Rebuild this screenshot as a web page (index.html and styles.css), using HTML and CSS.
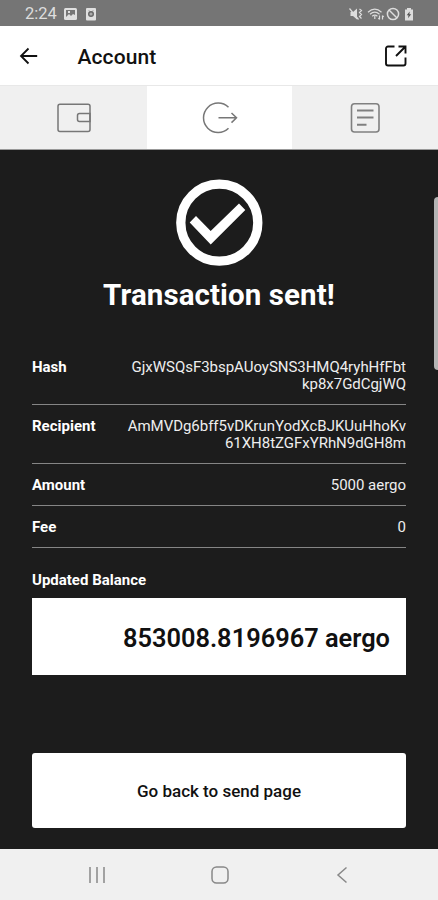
FILE: index.html
```html
<!DOCTYPE html>
<html lang="en">
<head>
<meta charset="utf-8">
<title>Account</title>
<link rel="stylesheet" href="styles.css">
</head>
<body>
<div class="screen">
  <div class="status">
    <span class="clock">2:24</span>
    <svg class="status-left" width="34" height="16" viewBox="0 0 34 16">
      <rect x="1" y="2" width="13" height="12" rx="1.500" fill="#e0e0e0"/>
      <path d="M3 4h9v5l-2-1-2 2-2-2-3 3z" fill="#777"/>
      <path d="M5 5h2v2H5z" fill="#e0e0e0"/>
      <rect x="23" y="2" width="10" height="12.500" rx="1" fill="#e0e0e0"/>
      <circle cx="28" cy="8" r="2.300" fill="#aaa" stroke="#666" stroke-width="1.400"/>
      <path d="M26 4.500l1 1M30 4.500l-1 1" stroke="#777"/>
    </svg>
    <svg class="status-right" width="68" height="16" viewBox="0 0 68 16" fill="none" stroke="#ddd" stroke-width="1.200">
      <path d="M2.500 6h2.500l4-3.500v11L5 10H2.500z" fill="#ddd" stroke="none"/>
      <path d="M1.500 2.500l9 11M11.500 3l2 1.500-2 2 2 2-2 2 2 2"/>
      <path d="M20 6.200c4.500-4 9-4 13.500 0M22 8.200c3-2.700 6.500-2.700 9.500 0M24.200 10.200c1.700-1.500 3.500-1.500 5.200 0"/>
      <path d="M26.800 10v3M31.500 9.500v4M34.500 13.500v-4M30.300 12l1.200 1.500M34.500 9.500l1.200 1.500"/>
      <circle cx="45" cy="8" r="5.600" stroke-width="1.500"/>
      <path d="M41 4l8 8" stroke-width="1.500"/>
      <path d="M57 3.500h2V2h4v1.500h2v11h-8z" fill="#ddd" stroke="none"/>
      <path d="M61.700 5.500l-3 3.800h1.800l-.5 3 3.200-4h-1.800z" fill="#555" stroke="none"/>
    </svg>
  </div>

  <header class="header">
    <svg width="20" height="20" viewBox="0 0 20 20" fill="none" stroke="#111" stroke-width="1.800"><path d="M19.200 10H3.500M10.500 2.500L3 10l7.500 7.500"/></svg>
    <h1 class="header-title">Account</h1>
    <svg class="open" width="24" height="24" viewBox="0 0 24 24" fill="none" stroke="#111" stroke-width="1.900"><path d="M10.500 2.500H4a2 2 0 0 0-2 2v15a2 2 0 0 0 2 2h15.500a2 2 0 0 0 2-2V13.500M14.500 2.500h7v7M21.500 2.500L12 12"/></svg>
  </header>

  <nav class="tabs">
    <div class="tab">
      <svg width="36" height="32" viewBox="0 0 36 32" fill="none" stroke="#777" stroke-width="1.500"><rect x="2" y="2.200" width="32" height="27.300" rx="2"/><path d="M34 11.500H23.500a2 2 0 0 0-2 2v4a2 2 0 0 0 2 2H34z"/></svg>
    </div>
    <div class="tab tab-active">
      <svg width="38" height="32" viewBox="0 0 38 32" fill="none" stroke="#777" stroke-width="1.500"><path d="M27.500 5.300A14.700 14.700 0 1 0 27.500 26.300M17.500 15.800H36M30.500 11l5 4.800-5 4.800"/></svg>
    </div>
    <div class="tab">
      <svg width="32" height="32" viewBox="0 0 32 32" fill="none" stroke="#808080" stroke-width="1.600"><rect x="2.500" y="1.700" width="27.500" height="28.300" rx="3"/><path d="M8 8.500h16.500M8 15.600h16.500M8 22.800h9.500" stroke-width="2"/></svg>
    </div>
  </nav>

  <main class="main">
    <div class="edge-handle"></div>
    <svg class="check" width="88" height="88" viewBox="0 0 88 88"><circle cx="44.300" cy="43.700" r="38.500" fill="none" stroke="#fff" stroke-width="9.300"/><path d="M14.700 43.500l6.300-6.500 14.700 15L64 24.500l6.300 6.500-34.600 34.500z" fill="#fff"/></svg>
    <h2 class="title">Transaction sent!</h2>
    <dl class="details">
      <div class="row"><dt>Hash</dt><dd>GjxWSQsF3bspAUoySNS3HMQ4ryhHfFbt<br>kp8x7GdCgjWQ</dd></div>
      <div class="row"><dt>Recipient</dt><dd>AmMVDg6bff5vDKrunYodXcBJKUuHhoKv<br>61XH8tZGFxYRhN9dGH8m</dd></div>
      <div class="row"><dt>Amount</dt><dd>5000 aergo</dd></div>
      <div class="row"><dt>Fee</dt><dd>0</dd></div>
    </dl>
    <div class="balance-label">Updated Balance</div>
    <div class="balance">853008.8196967 aergo</div>
    <button class="back-button">Go back to send page</button>
  </main>

  <footer class="navbar">
    <svg width="18" height="18" viewBox="0 0 18 18" stroke="#888" stroke-width="1.500"><path d="M2 1v16M9 1v16M16 1v16"/></svg>
    <svg width="20" height="20" viewBox="0 0 20 20" fill="none" stroke="#888" stroke-width="1.500"><rect x="2" y="2" width="16" height="16" rx="4.500"/></svg>
    <svg width="18" height="18" viewBox="0 0 18 18" fill="none" stroke="#888" stroke-width="1.500"><path d="M13.500 1.500L5 9l8.500 7.500"/></svg>
  </footer>
</div>
</body>
</html>
```
FILE: styles.css
```css
* { box-sizing: border-box; margin: 0; padding: 0; }
body { width: 438px; height: 900px; overflow: hidden; font-family: Roboto, sans-serif; background: #1c1c1c; }
svg { display: block; flex: none; }
.screen { display: flex; flex-direction: column; width: 438px; height: 900px; }
.status { display: flex; align-items: center; height: 26px; padding: 1px 22px 0 25px; background: #757575; }
.clock { width: 32px; font-size: 16.5px; line-height: 24px; color: #ddd; }
.status-left { margin-left: 6px; }
.status-right { margin-left: auto; }
.header { display: flex; align-items: center; height: 59px; padding: 1px 30px 0 18px; background: #fff; }
.header-title { margin-left: 39.5px; padding-top: 2px; font-size: 21px; font-weight: 500; line-height: 30px; letter-spacing: 0.1px; color: #111; }
.open { margin-left: auto; }
.tabs { display: grid; grid-template-columns: 147px 145px 146px; height: 65px; background: #f0f0f0; border-top: 1px solid #e8e8e8; border-bottom: 1px solid #999; }
.tab { display: flex; align-items: center; justify-content: center; padding-top: 0; }
.tab-active { background: #fff; }
.main { position: relative; display: flex; flex-direction: column; height: 699px; padding: 29px 32px 0; background: #1c1c1c; color: #fff; }
.edge-handle { position: absolute; top: 47px; right: 0; width: 4px; height: 173px; border-radius: 4px 0 0 4px; background: #b4b4b4; }
.check { align-self: center; }
.title { margin-top: 10px; font-size: 29.5px; font-weight: 700; line-height: 36px; letter-spacing: 0.1px; text-align: center; white-space: nowrap; }
.details { margin-top: 33px; }
.row { display: flex; justify-content: space-between; padding: 13px 0 11px; border-bottom: 1px solid #858585; font-size: 15px; line-height: 17px; }
.row dt { font-weight: 700; }
.row dd { text-align: right; white-space: nowrap; letter-spacing: -0.03px; color: #eee; }
.balance-label { margin-top: 22px; font-size: 15px; font-weight: 700; line-height: 20px; }
.balance { display: flex; align-items: center; justify-content: flex-end; height: 77px; margin-top: 8px; padding: 2px 16px 0 0; background: #fff; color: #111; font-size: 25.4px; font-weight: 600; }
.back-button { height: 75px; margin-top: 78px; border: 0; border-radius: 3px; background: #fff; color: #111; font: 500 17px Roboto, sans-serif; }
.navbar { display: flex; align-items: center; justify-content: space-between; height: 51px; padding: 0 87px 0 88px; background: #f0f0f0; }
```
